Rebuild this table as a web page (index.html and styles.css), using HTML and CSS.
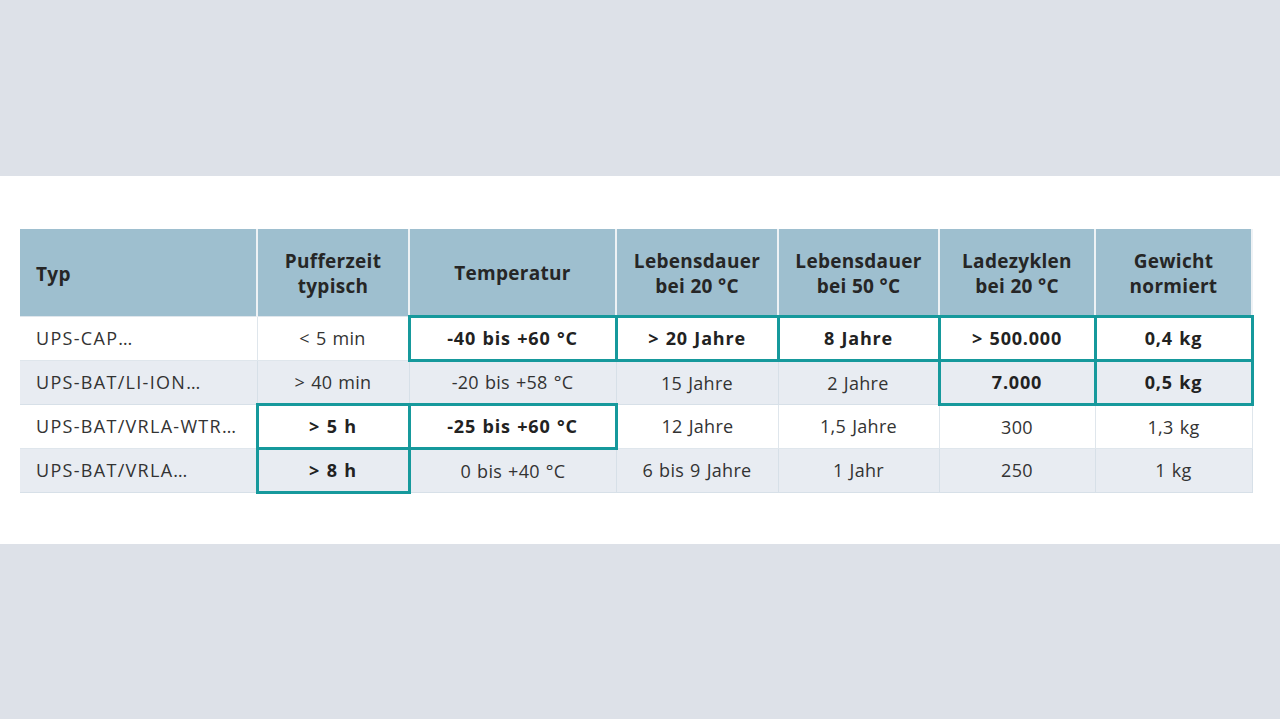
FILE: index.html
```html
<!DOCTYPE html>
<html lang="de">
<head>
<meta charset="utf-8">
<title>USV Vergleich</title>
<link rel="stylesheet" href="styles.css">
</head>
<body>
<div class="band"></div>
<section class="sheet">
  <table class="cmp">
    <colgroup>
      <col class="c1"><col class="c2"><col class="c3"><col class="c4"><col class="c5"><col class="c6"><col class="c7">
    </colgroup>
    <thead>
      <tr>
        <th class="first">Typ</th>
        <th>Pufferzeit<br>typisch</th>
        <th>Temperatur</th>
        <th>Lebensdauer<br>bei 20 °C</th>
        <th>Lebensdauer<br>bei 50 °C</th>
        <th>Ladezyklen<br>bei 20 °C</th>
        <th>Gewicht<br>normiert</th>
      </tr>
    </thead>
    <tbody>
      <tr>
        <td class="first">UPS-CAP…</td>
        <td>&lt; 5 min</td>
        <td class="hl">-40 bis +60 °C</td>
        <td class="hl">&gt; 20 Jahre</td>
        <td class="hl">8 Jahre</td>
        <td class="hl">&gt; 500.000</td>
        <td class="hl">0,4 kg</td>
      </tr>
      <tr class="alt">
        <td class="first">UPS-BAT/LI-ION…</td>
        <td>&gt; 40 min</td>
        <td>-20 bis +58 °C</td>
        <td>15 Jahre</td>
        <td>2 Jahre</td>
        <td class="hl">7.000</td>
        <td class="hl">0,5 kg</td>
      </tr>
      <tr>
        <td class="first">UPS-BAT/VRLA-WTR…</td>
        <td class="hl">&gt; 5 h</td>
        <td class="hl">-25 bis +60 °C</td>
        <td>12 Jahre</td>
        <td>1,5 Jahre</td>
        <td>300</td>
        <td>1,3 kg</td>
      </tr>
      <tr class="alt">
        <td class="first">UPS-BAT/VRLA…</td>
        <td class="hl">&gt; 8 h</td>
        <td>0 bis +40 °C</td>
        <td>6 bis 9 Jahre</td>
        <td>1 Jahr</td>
        <td>250</td>
        <td>1 kg</td>
      </tr>
    </tbody>
  </table>
</section>
<div class="band bottom"></div>
</body>
</html>
```
FILE: styles.css
```css
html, body {
  margin: 0;
  padding: 0;
  height: 100%;
}
body {
  background: #dde1e8;
  font-family: "Open Sans", "Lato", sans-serif;
  color: #2c2c2c;
  display: flex;
  flex-direction: column;
}
.band {
  height: 176px;
  background: #dde1e8;
  flex: none;
}
.band.bottom {
  flex: 1;
  height: auto;
}
.sheet {
  background: #ffffff;
  height: 368px;
  box-sizing: border-box;
  padding: 53px 0 0 20px;
  flex: none;
}
.cmp {
  border-collapse: collapse;
  table-layout: fixed;
  width: 1232px;
}
.c1 { width: 237px; }
.c2 { width: 152px; }
.c3 { width: 207px; }
.c4 { width: 162px; }
.c5 { width: 161px; }
.c6 { width: 156px; }
.c7 { width: 157px; }
.cmp th {
  background: #9ebfcf;
  height: 87px;
  padding: 4px 0 0;
  font-size: 19px;
  font-weight: 700;
  letter-spacing: 0.3px;
  line-height: 25px;
  text-align: center;
  color: #262626;
  border-left: 2px solid #eef2f5;
  border-right: 2px solid #eef2f5;
  box-sizing: border-box;
}
.cmp th.first {
  text-align: left;
  padding-left: 16px;
  border-left: none;
}
.cmp td {
  height: 44px;
  padding: 0;
  font-size: 18px;
  letter-spacing: 0.3px;
  word-spacing: 1px;
  text-align: center;
  color: #333333;
  background: #ffffff;
  border: 1px solid #dfe6ec;
  box-sizing: border-box;
}
.cmp tr.alt td {
  background: #e8ecf2;
  border-color: #d7e0e8;
}
.cmp tbody td.first {
  text-align: left;
  padding-left: 16px;
  letter-spacing: 1.3px;
  border-left: none;
}
.cmp tbody td.hl {
  border: 3px solid #16999c;
  font-weight: 700;
  font-size: 18px;
  letter-spacing: 0.8px;
  word-spacing: 1px;
  color: #222222;
}
```
